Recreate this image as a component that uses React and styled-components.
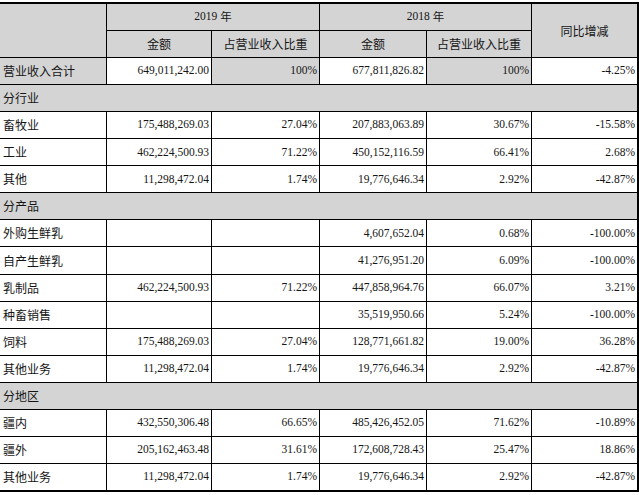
import React from "react";
import styled, { createGlobalStyle } from "styled-components";

const Global = createGlobalStyle`
  html, body { margin: 0; padding: 0; background: #ffffff; }
  body { font-family: "Liberation Serif", "Noto Sans CJK SC", serif; }
`;

const Table = styled.div`
  margin-top: 2px;
  width: 639px;
  height: 490px;
  box-sizing: border-box;
  display: grid;
  grid-template-columns: 106px 104px 107px 106px 104px 105px;
  grid-template-rows: repeat(18, 1fr);
  gap: 1px;
  padding: 2px 2px 2px 0;
  background: #000;
`;

const Cell = styled.div`
  background: ${(p) => (p.$gray ? "#d4d4d4" : "#ffffff")};
  color: #151515;
  display: flex;
  align-items: center;
  justify-content: ${(p) =>
    p.$align === "right" ? "flex-end" : p.$align === "center" ? "center" : "flex-start"};
  padding: ${(p) => (p.$align === "right" ? "0 2px 0 0" : p.$align === "center" ? "0" : "0 0 0 3px")};
  font-family: ${(p) =>
    p.$num
      ? `"Liberation Serif", "Noto Sans CJK SC", serif`
      : `"Noto Sans CJK SC", "Liberation Serif", sans-serif`};
  font-size: ${(p) => (p.$num ? "11.5px" : "12px")};
  line-height: 1;
  white-space: nowrap;
  overflow: hidden;
  grid-column: ${(p) => (p.$colSpan ? `span ${p.$colSpan}` : "auto")};
  grid-row: ${(p) => (p.$rowSpan ? `span ${p.$rowSpan}` : "auto")};
`;

const YearText = styled.span`
  font-family: "Liberation Serif", "Noto Sans CJK SC", serif;
  font-size: 11.5px;
`;

const CjkText = styled.span`
  font-family: "Noto Sans CJK SC", sans-serif;
  font-size: 11.5px;
`;

const rows = [
  { type: "total", cells: ["营业收入合计", "649,011,242.00", "100%", "677,811,826.82", "100%", "-4.25%"] },
  { type: "section", label: "分行业" },
  { cells: ["畜牧业", "175,488,269.03", "27.04%", "207,883,063.89", "30.67%", "-15.58%"] },
  { cells: ["工业", "462,224,500.93", "71.22%", "450,152,116.59", "66.41%", "2.68%"] },
  { cells: ["其他", "11,298,472.04", "1.74%", "19,776,646.34", "2.92%", "-42.87%"] },
  { type: "section", label: "分产品" },
  { cells: ["外购生鲜乳", "", "", "4,607,652.04", "0.68%", "-100.00%"] },
  { cells: ["自产生鲜乳", "", "", "41,276,951.20", "6.09%", "-100.00%"] },
  { cells: ["乳制品", "462,224,500.93", "71.22%", "447,858,964.76", "66.07%", "3.21%"] },
  { cells: ["种畜销售", "", "", "35,519,950.66", "5.24%", "-100.00%"] },
  { cells: ["饲料", "175,488,269.03", "27.04%", "128,771,661.82", "19.00%", "36.28%"] },
  { cells: ["其他业务", "11,298,472.04", "1.74%", "19,776,646.34", "2.92%", "-42.87%"] },
  { type: "section", label: "分地区" },
  { cells: ["疆内", "432,550,306.48", "66.65%", "485,426,452.05", "71.62%", "-10.89%"] },
  { cells: ["疆外", "205,162,463.48", "31.61%", "172,608,728.43", "25.47%", "18.86%"] },
  { cells: ["其他业务", "11,298,472.04", "1.74%", "19,776,646.34", "2.92%", "-42.87%"] },
];

export default function App() {
  return (
    <>
      <Global />
      <Table>
        <Cell $gray $rowSpan={2} />
        <Cell $gray $colSpan={2} $align="center">
          <YearText>2019&nbsp;</YearText>
          <CjkText>年</CjkText>
        </Cell>
        <Cell $gray $colSpan={2} $align="center">
          <YearText>2018&nbsp;</YearText>
          <CjkText>年</CjkText>
        </Cell>
        <Cell $gray $rowSpan={2} $align="center">同比增减</Cell>
        <Cell $gray $align="center">金额</Cell>
        <Cell $gray $align="center">占营业收入比重</Cell>
        <Cell $gray $align="center">金额</Cell>
        <Cell $gray $align="center">占营业收入比重</Cell>

        {rows.map((r, i) => {
          if (r.type === "section") {
            return (
              <Cell key={i} $gray $colSpan={6}>
                {r.label}
              </Cell>
            );
          }
          const isTotal = r.type === "total";
          return (
            <React.Fragment key={i}>
              <Cell $gray={isTotal}>{r.cells[0]}</Cell>
              {r.cells.slice(1).map((v, j) => (
                <Cell key={j} $num $align="right" $gray={isTotal && (j === 1 || j === 3)}>
                  {v}
                </Cell>
              ))}
            </React.Fragment>
          );
        })}
      </Table>
    </>
  );
}
